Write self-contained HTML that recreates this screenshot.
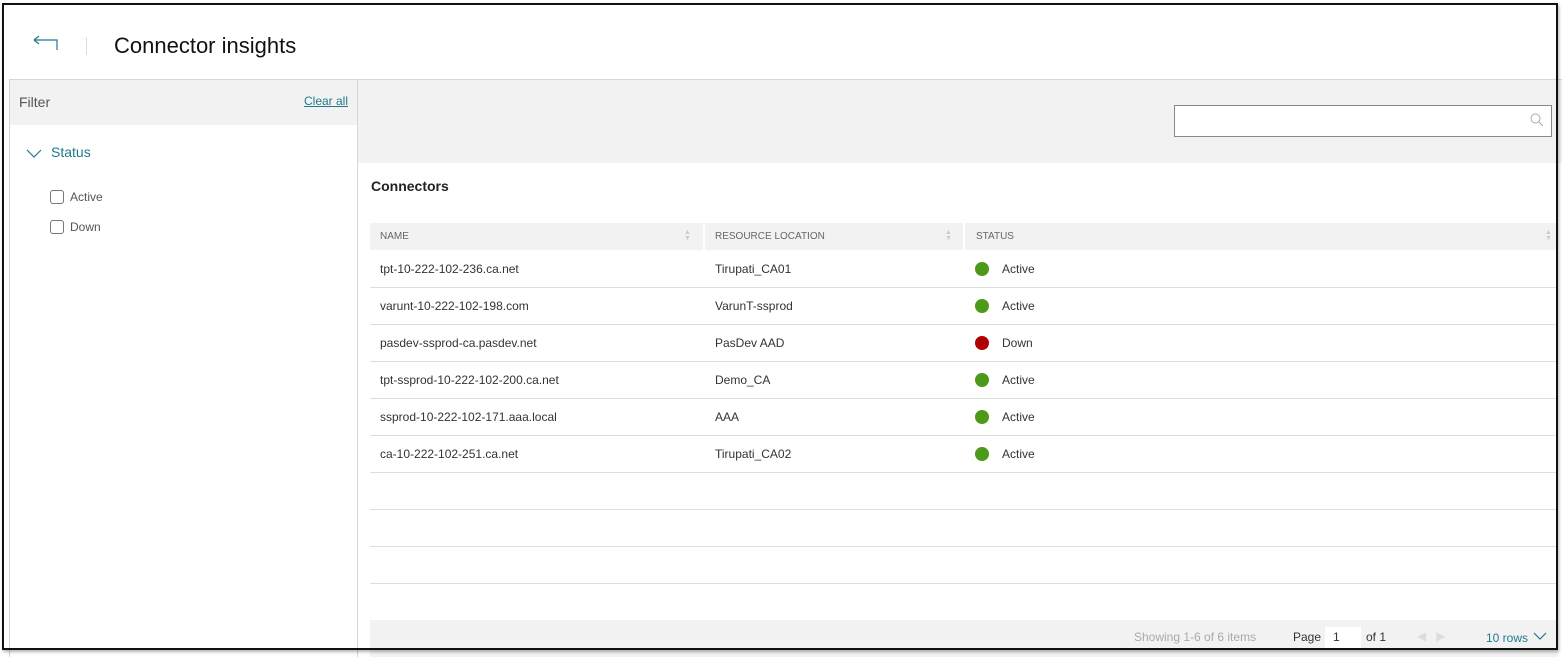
<!DOCTYPE html>
<html><head><style>
*{box-sizing:border-box;margin:0;padding:0}
body{width:1562px;height:657px;background:#fff;font-family:"Liberation Sans",sans-serif;position:relative;overflow:hidden;color:#222}
.a{position:absolute}
.row{position:absolute;left:370px;width:1188px;height:37px;border-bottom:1px solid #ddd;font-size:12px;color:#333}
.row span{position:absolute;top:11px}
.dot{position:absolute;left:605px;top:11px;width:14px;height:14px;border-radius:50%;background:#4d9a1a}
.cb{position:absolute;width:14px;height:14px;border:1px solid #777;border-radius:3px;background:#fff}
</style></head><body>
<div class="a" style="left:9px;top:79px;width:349px;height:578px;border:1px solid #d6d6d6;border-bottom:none"></div>
<div class="a" style="left:10px;top:80px;width:347px;height:45px;background:#f2f2f2"></div>
<div class="a" style="left:19px;top:94px;font-size:14px;color:#555">Filter</div>
<div class="a" style="left:304px;top:94px;font-size:12px;color:#1f7a8c;text-decoration:underline">Clear all</div>
<svg class="a" style="left:26px;top:148px" width="16" height="10"><path d="M1 2 L8 9 L15 2" fill="none" stroke="#1f7a8c" stroke-width="1.2"/></svg>
<div class="a" style="left:51px;top:144px;font-size:14px;color:#1f7a8c">Status</div>
<div class="cb" style="left:50px;top:190px"></div><div class="a" style="left:70px;top:190px;font-size:12px;color:#555">Active</div>
<div class="cb" style="left:50px;top:220px"></div><div class="a" style="left:70px;top:220px;font-size:12px;color:#555">Down</div>
<div class="a" style="left:358px;top:79px;width:1204px;height:1px;background:#d6d6d6"></div>
<div class="a" style="left:358px;top:80px;width:1204px;height:83px;background:#f2f2f2"></div>
<div class="a" style="left:1174px;top:105px;width:378px;height:32px;border:1px solid #888;background:#fff"></div>
<svg class="a" style="left:1529px;top:112px" width="16" height="16"><circle cx="6.5" cy="6.5" r="4.5" fill="none" stroke="#aaa" stroke-width="1"/><path d="M10 10 L14 14" stroke="#aaa" stroke-width="1"/></svg>
<svg class="a" style="left:32px;top:35px" width="28" height="16"><path d="M2 5 H25 V15 M2 5 L7 1 M2 5 L7 9" fill="none" stroke="#1f7a8c" stroke-width="1.2"/></svg>
<div class="a" style="left:86px;top:37px;width:1px;height:18px;background:#ddd"></div>
<div class="a" style="left:114px;top:33px;font-size:22px;color:#111">Connector insights</div>
<div class="a" style="left:371px;top:178px;font-size:14px;font-weight:bold;color:#222">Connectors</div>
<div class="a" style="left:370px;top:223px;width:333px;height:27px;background:#f2f2f2"></div>
<div class="a" style="left:705px;top:223px;width:258px;height:27px;background:#f2f2f2"></div>
<div class="a" style="left:965px;top:223px;width:593px;height:27px;background:#f2f2f2"></div>
<div class="a" style="left:380px;top:231px;font-size:10px;color:#666">NAME</div>
<div class="a" style="left:715px;top:231px;font-size:10px;color:#666">RESOURCE LOCATION</div>
<div class="a" style="left:976px;top:231px;font-size:10px;color:#666">STATUS</div>
<div class="a" style="left:684px;top:230px;font-size:7px;line-height:6px;color:#ccc">▲<br>▼</div>
<div class="a" style="left:945px;top:230px;font-size:7px;line-height:6px;color:#ccc">▲<br>▼</div>
<div class="a" style="left:1545px;top:230px;font-size:7px;line-height:6px;color:#ccc">▲<br>▼</div>
<div class="row" style="top:251px"><span style="left:10px">tpt-10-222-102-236.ca.net</span><span style="left:345px">Tirupati_CA01</span><div class="dot"></div><span style="left:632px">Active</span></div>
<div class="row" style="top:288px"><span style="left:10px">varunt-10-222-102-198.com</span><span style="left:345px">VarunT-ssprod</span><div class="dot"></div><span style="left:632px">Active</span></div>
<div class="row" style="top:325px"><span style="left:10px">pasdev-ssprod-ca.pasdev.net</span><span style="left:345px">PasDev AAD</span><div class="dot" style="background:#b00000"></div><span style="left:632px">Down</span></div>
<div class="row" style="top:362px"><span style="left:10px">tpt-ssprod-10-222-102-200.ca.net</span><span style="left:345px">Demo_CA</span><div class="dot"></div><span style="left:632px">Active</span></div>
<div class="row" style="top:399px"><span style="left:10px">ssprod-10-222-102-171.aaa.local</span><span style="left:345px">AAA</span><div class="dot"></div><span style="left:632px">Active</span></div>
<div class="row" style="top:436px"><span style="left:10px">ca-10-222-102-251.ca.net</span><span style="left:345px">Tirupati_CA02</span><div class="dot"></div><span style="left:632px">Active</span></div>
<div class="row" style="top:473px"></div><div class="row" style="top:510px"></div><div class="row" style="top:547px"></div>
<div class="a" style="left:370px;top:620px;width:1188px;height:37px;background:#f2f2f2"></div>
<div class="a" style="left:1134px;top:630px;font-size:12px;color:#aaa">Showing 1-6 of 6 items</div>
<div class="a" style="left:1293px;top:630px;font-size:12px;color:#333">Page</div>
<div class="a" style="left:1325px;top:627px;width:36px;height:22px;background:#fff;font-size:12px;padding:3px 8px;color:#333">1</div>
<div class="a" style="left:1366px;top:630px;font-size:12px;color:#333">of 1</div>
<div class="a" style="left:1417px;top:629px;font-size:12px;color:#ddd">◀ &nbsp; ▶</div>
<div class="a" style="left:1486px;top:631px;font-size:12px;color:#1f7a8c">10 rows</div>
<svg class="a" style="left:1533px;top:632px" width="14" height="9"><path d="M1 1 L7 7 L13 1" fill="none" stroke="#1f7a8c" stroke-width="1.2"/></svg>
<div class="a" style="left:2px;top:3px;width:1556px;height:647px;border:2px solid #111;box-shadow:1px 2px 3px rgba(0,0,0,.3)"></div>
</body></html>
